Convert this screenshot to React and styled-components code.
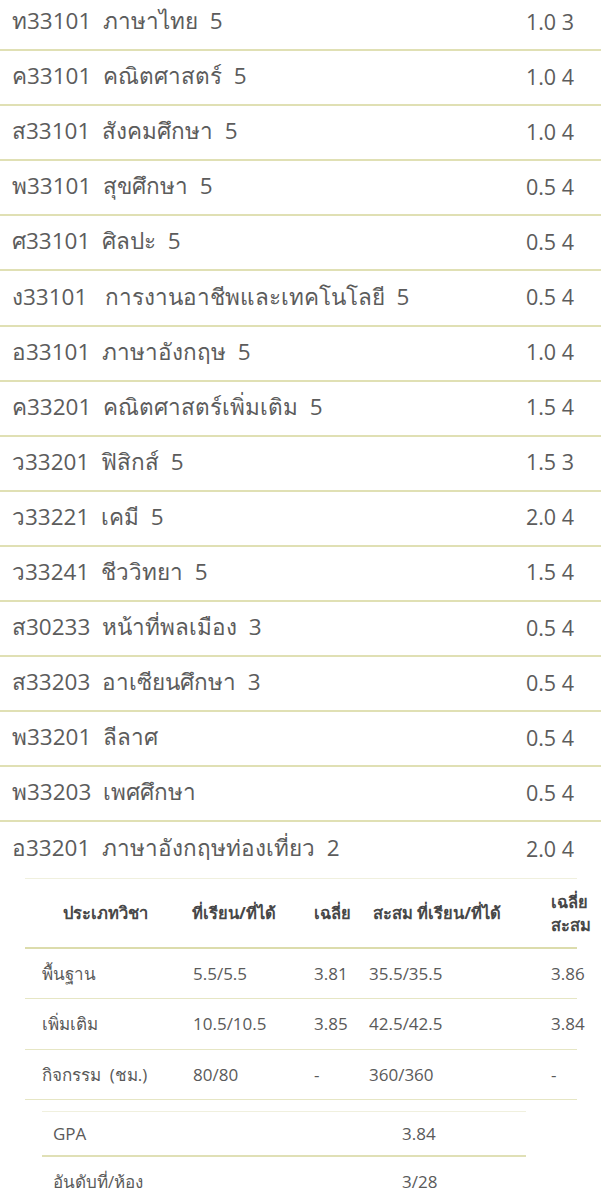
import React from "react";
import styled, { createGlobalStyle } from "styled-components";

const GlobalStyle = createGlobalStyle`
  html, body { margin: 0; padding: 0; background: #ffffff; }
  body {
    font-family: "Open Sans", "Noto Sans", "DejaVu Sans", sans-serif;
    color: #5a5a5a;
    overflow: hidden;
  }
`;

const Page = styled.div`
  width: 612px;
  height: 1200px;
  overflow: hidden;
`;

const SubjectList = styled.div`
  width: 601px;
  margin-top: -4px;
`;

const SubjectRow = styled.div`
  box-sizing: border-box;
  height: 55.1px;
  display: flex;
  align-items: center;
  justify-content: space-between;
  padding: 0 27px 3px 12px;
  border-bottom: ${(p) => (p.$last ? "none" : "2px solid #e0e0b4")};
  font-size: 22.5px;
  color: #5c5c5c;
  white-space: pre;
`;

const SubjectName = styled.span``;
const SubjectCredit = styled.span`
  font-size: 21.5px;
`;

const Summary = styled.div`
  margin-left: 25px;
  width: 552px;
  border-top: 1px solid #f0f0de;
`;

const SummaryRow = styled.div`
  box-sizing: border-box;
  display: grid;
  grid-template-columns: 151px 121px 55px 182px 43px;
  align-items: center;
  height: ${(p) => (p.$head ? "70px" : "50.5px")};
  border-bottom: ${(p) => (p.$head ? "2px solid #dcdcac" : "1.5px solid #e6e6c4")};
`;

const HeadCell = styled.div`
  padding-left: ${(p) => p.$pl || 17}px;
  font-size: 16.5px;
  font-weight: 700;
  color: #474747;
  white-space: nowrap;
  line-height: 23px;
`;

const Cell = styled.div`
  padding-left: 17px;
  font-size: 17px;
  color: #5a5a5a;
  white-space: pre;
`;

const GpaTable = styled.div`
  margin: 11px 0 0 42px;
  width: 484px;
  border-top: 1px solid #f0f0de;
`;

const GpaRow = styled.div`
  box-sizing: border-box;
  display: grid;
  grid-template-columns: 349px 1fr;
  align-items: center;
  font-size: 17px;
  color: #5a5a5a;
  height: ${(p) => (p.$bordered ? "45px" : "26px")};
  margin-top: ${(p) => (p.$first ? "11px" : "0")};
  border-bottom: ${(p) => (p.$bordered ? "2px solid #e0e0b6" : "none")};
`;

const GpaCell = styled.div`
  padding-left: 11px;
`;

const subjects = [
  ["ท33101  ภาษาไทย  5", "1.0 3"],
  ["ค33101  คณิตศาสตร์  5", "1.0 4"],
  ["ส33101  สังคมศึกษา  5", "1.0 4"],
  ["พ33101  สุขศึกษา  5", "0.5 4"],
  ["ศ33101  ศิลปะ  5", "0.5 4"],
  ["ง33101   การงานอาชีพและเทคโนโลยี  5", "0.5 4"],
  ["อ33101  ภาษาอังกฤษ  5", "1.0 4"],
  ["ค33201  คณิตศาสตร์เพิ่มเติม  5", "1.5 4"],
  ["ว33201  ฟิสิกส์  5", "1.5 3"],
  ["ว33221  เคมี  5", "2.0 4"],
  ["ว33241  ชีววิทยา  5", "1.5 4"],
  ["ส30233  หน้าที่พลเมือง  3", "0.5 4"],
  ["ส33203  อาเซียนศึกษา  3", "0.5 4"],
  ["พ33201  ลีลาศ", "0.5 4"],
  ["พ33203  เพศศึกษา", "0.5 4"],
  ["อ33201  ภาษาอังกฤษท่องเที่ยว  2", "2.0 4"],
];

const summary = [
  ["พื้นฐาน", "5.5/5.5", "3.81", "35.5/35.5", "3.86"],
  ["เพิ่มเติม", "10.5/10.5", "3.85", "42.5/42.5", "3.84"],
  ["กิจกรรม  (ชม.)", "80/80", "-", "360/360", "-"],
];

export default function App() {
  return (
    <Page>
      <GlobalStyle />
      <SubjectList>
        {subjects.map(([name, credit], i) => (
          <SubjectRow key={i} $last={i === subjects.length - 1}>
            <SubjectName>{name}</SubjectName>
            <SubjectCredit>{credit}</SubjectCredit>
          </SubjectRow>
        ))}
      </SubjectList>

      <Summary>
        <SummaryRow $head>
          <HeadCell $pl={38}>ประเภทวิชา</HeadCell>
          <HeadCell $pl={16}>ที่เรียน/ที่ได้</HeadCell>
          <HeadCell>เฉลี่ย</HeadCell>
          <HeadCell $pl={21}>สะสม  ที่เรียน/ที่ได้</HeadCell>
          <HeadCell>
            เฉลี่ย
            <br />
            สะสม
          </HeadCell>
        </SummaryRow>
        {summary.map((row, i) => (
          <SummaryRow key={i}>
            {row.map((c, j) => (
              <Cell key={j}>{c}</Cell>
            ))}
          </SummaryRow>
        ))}
      </Summary>

      <GpaTable>
        <GpaRow $bordered>
          <GpaCell>GPA</GpaCell>
          <GpaCell>3.84</GpaCell>
        </GpaRow>
        <GpaRow $first>
          <GpaCell>อันดับที่/ห้อง</GpaCell>
          <GpaCell>3/28</GpaCell>
        </GpaRow>
        <GpaRow>
          <GpaCell>GPA</GpaCell>
          <GpaCell>3.84</GpaCell>
        </GpaRow>
      </GpaTable>
    </Page>
  );
}
